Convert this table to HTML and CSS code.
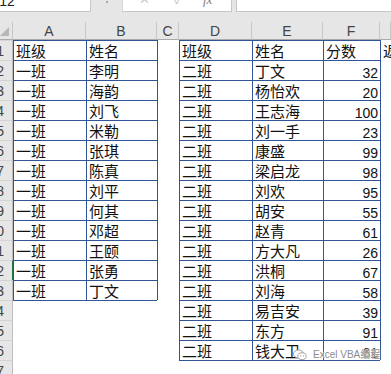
FILE: index.html
```html
<!DOCTYPE html>
<html lang="zh-CN">
<head>
<meta charset="utf-8">
<title>成绩表</title>
<link rel="stylesheet" href="styles.css">
</head>
<body>
<div class="app">
  <div class="fbar">
    <div class="namebox"><span>A12</span></div>
    <div class="grip"></div>
    <div class="fx-tools"><span class="tool">✕</span><span class="tool">✓</span><span class="tool fx">fx</span></div>
    <div class="finput"></div>
  </div>
  <div class="strip"></div>

  <div class="sheet">
    <div class="row head">
      <div class="corner"><svg width="13" height="18" viewBox="0 0 13 18"><polygon points="0,14 9,14 9,5" fill="#b7b7b7"/></svg></div>
      <div class="ch">A</div><div class="ch">B</div><div class="ch">C</div><div class="ch">D</div><div class="ch">E</div><div class="ch">F</div><div class="ch"></div>
    </div>

    <div class="row"><div class="rh">1</div><div class="c l t">班级</div><div class="c l t">姓名</div><div class="c l"></div><div class="c l t">班级</div><div class="c l t">姓名</div><div class="c l t">分数</div><div class="c l">返</div></div>
    <div class="row"><div class="rh">2</div><div class="c l t">一班</div><div class="c l t">李明</div><div class="c l"></div><div class="c l t">二班</div><div class="c l t">丁文</div><div class="c l t n">32</div><div class="c l"></div></div>
    <div class="row"><div class="rh">3</div><div class="c l t">一班</div><div class="c l t">海韵</div><div class="c l"></div><div class="c l t">二班</div><div class="c l t">杨怡欢</div><div class="c l t n">20</div><div class="c l"></div></div>
    <div class="row"><div class="rh">4</div><div class="c l t">一班</div><div class="c l t">刘飞</div><div class="c l"></div><div class="c l t">二班</div><div class="c l t">王志海</div><div class="c l t n">100</div><div class="c l"></div></div>
    <div class="row"><div class="rh">5</div><div class="c l t">一班</div><div class="c l t">米勒</div><div class="c l"></div><div class="c l t">二班</div><div class="c l t">刘一手</div><div class="c l t n">23</div><div class="c l"></div></div>
    <div class="row"><div class="rh">6</div><div class="c l t">一班</div><div class="c l t">张琪</div><div class="c l"></div><div class="c l t">二班</div><div class="c l t">康盛</div><div class="c l t n">99</div><div class="c l"></div></div>
    <div class="row"><div class="rh">7</div><div class="c l t">一班</div><div class="c l t">陈真</div><div class="c l"></div><div class="c l t">二班</div><div class="c l t">梁启龙</div><div class="c l t n">98</div><div class="c l"></div></div>
    <div class="row"><div class="rh">8</div><div class="c l t">一班</div><div class="c l t">刘平</div><div class="c l"></div><div class="c l t">二班</div><div class="c l t">刘欢</div><div class="c l t n">95</div><div class="c l"></div></div>
    <div class="row"><div class="rh">9</div><div class="c l t">一班</div><div class="c l t">何其</div><div class="c l"></div><div class="c l t">二班</div><div class="c l t">胡安</div><div class="c l t n">55</div><div class="c l"></div></div>
    <div class="row"><div class="rh">10</div><div class="c l t">一班</div><div class="c l t">邓超</div><div class="c l"></div><div class="c l t">二班</div><div class="c l t">赵青</div><div class="c l t n">61</div><div class="c l"></div></div>
    <div class="row"><div class="rh">11</div><div class="c l t">一班</div><div class="c l t">王颐</div><div class="c l"></div><div class="c l t">二班</div><div class="c l t">方大凡</div><div class="c l t n">26</div><div class="c l"></div></div>
    <div class="row"><div class="rh active">12</div><div class="c l t">一班</div><div class="c l t">张勇</div><div class="c l"></div><div class="c l t">二班</div><div class="c l t">洪桐</div><div class="c l t n">67</div><div class="c l"></div></div>
    <div class="row"><div class="rh">13</div><div class="c l t">一班</div><div class="c l t">丁文</div><div class="c l"></div><div class="c l t">二班</div><div class="c l t">刘海</div><div class="c l t n">58</div><div class="c l"></div></div>
    <div class="row"><div class="rh">14</div><div class="c t"></div><div class="c t"></div><div class="c"></div><div class="c l t">二班</div><div class="c l t">易吉安</div><div class="c l t n">39</div><div class="c l"></div></div>
    <div class="row"><div class="rh">15</div><div class="c"></div><div class="c"></div><div class="c"></div><div class="c l t">二班</div><div class="c l t">东方</div><div class="c l t n">91</div><div class="c l"></div></div>
    <div class="row"><div class="rh">16</div><div class="c"></div><div class="c"></div><div class="c"></div><div class="c l t">二班</div><div class="c l t">钱大卫</div><div class="c l t n">61</div><div class="c l"></div></div>
    <div class="row"><div class="rh">17</div><div class="c"></div><div class="c"></div><div class="c"></div><div class="c t"></div><div class="c t"></div><div class="c t"></div><div class="c"></div></div>
  </div>

  <div class="watermark">
    <svg width="14" height="12" viewBox="0 0 14 12">
      <ellipse cx="5.5" cy="5" rx="5" ry="4" fill="#fff" stroke="#9a9a9a" stroke-width="0.9"/>
      <ellipse cx="9" cy="7.2" rx="4.2" ry="3.4" fill="#fff" stroke="#9a9a9a" stroke-width="0.9"/>
      <circle cx="7.6" cy="6.9" r="0.6" fill="#9a9a9a"/>
      <circle cx="10.4" cy="6.9" r="0.6" fill="#9a9a9a"/>
    </svg>
    <span>Excel VBA编程</span>
  </div>
</div>
</body>
</html>
```

FILE: styles.css
```css
html, body {
  margin: 0;
  padding: 0;
}

body {
  width: 391px;
  height: 374px;
  overflow: hidden;
  background: #e6e6e6;
  font-family: "Liberation Sans", Arial, sans-serif;
}

.app {
  position: relative;
  width: 391px;
  height: 374px;
  overflow: hidden;
}

/* formula bar, only its lower edge is in view */
.fbar {
  display: flex;
  height: 12px;
  background: #e6e6e6;
}

.namebox {
  position: relative;
  width: 91px;
  box-sizing: border-box;
  background: #fff;
  border-right: 1px solid #c6c6c6;
  border-bottom: 1px solid #c6c6c6;
  overflow: hidden;
}

.namebox span {
  position: absolute;
  left: -10px;
  top: -6px;
  font-size: 14px;
  line-height: 14px;
  color: #222;
}

.grip {
  width: 31px;
  position: relative;
}

.grip::after {
  content: "";
  position: absolute;
  left: 15px;
  top: 1px;
  width: 2px;
  height: 2px;
  background: #a8a8a8;
}

.fx-tools {
  width: 110px;
  box-sizing: border-box;
  background: #fff;
  border-left: 1px solid #d4d4d4;
  border-right: 1px solid #c6c6c6;
  border-bottom: 1px solid #c6c6c6;
  display: flex;
  align-items: flex-start;
  overflow: hidden;
}

.tool {
  font-size: 13px;
  line-height: 13px;
  margin-top: -7px;
  color: #c9c9c9;
}

.tool:nth-child(1) { margin-left: 16px; }
.tool:nth-child(2) { margin-left: 24px; }

.fx {
  margin-left: 20px;
  font-family: "Liberation Serif", serif;
  font-style: italic;
  color: #7d7d7d;
}

.finput {
  flex: 1;
  margin-left: 4px;
  background: #fff;
  border-left: 1px solid #c6c6c6;
  border-bottom: 1px solid #c6c6c6;
}

.strip {
  height: 10px;
  background: #e6e6e6;
}

/* worksheet grid */
.sheet {
  background: #fff;
}

.row {
  display: grid;
  grid-template-columns: 13px 73px 71px 22px 73px 71px 57px 11px;
  height: 20px;
}

.row.head {
  height: 18px;
  background: #e6e6e6;
}

.corner {
  box-sizing: border-box;
  border-right: 1px solid #c6c6c6;
  border-bottom: 1px solid #ababab;
  height: 18px;
}

.corner svg {
  display: block;
}

.ch {
  box-sizing: border-box;
  border-right: 1px solid #c6c6c6;
  border-bottom: 1px solid #ababab;
  display: flex;
  align-items: center;
  justify-content: center;
  font-size: 14px;
  color: #444;
  padding-top: 1px;
}

.rh {
  box-sizing: border-box;
  background: #e6e6e6;
  border-top: 1px solid #d3d3d3;
  border-right: 1px solid #bdbdbd;
  display: flex;
  align-items: center;
  justify-content: flex-end;
  padding-right: 8px;
  overflow: hidden;
  white-space: nowrap;
  font-size: 14px;
  color: #444;
}

.rh.active {
  border-right: 1px solid #217346;
}

.c {
  box-sizing: border-box;
  display: flex;
  align-items: center;
  padding-left: 2px;
  overflow: hidden;
  white-space: nowrap;
  font-family: "Noto Sans CJK SC", "Liberation Sans", sans-serif;
  font-size: 15px;
  line-height: 19px;
  color: #111;
}

.l { border-left: 1px solid #2f5597; }
.t { border-top: 1px solid #2f5597; }

.n {
  justify-content: flex-end;
  align-items: flex-end;
  padding: 0 2px 0 0;
  font-family: "Liberation Sans", Arial, sans-serif;
  font-size: 14px;
  line-height: 14px;
}

/* account mark in the lower right corner */
.watermark {
  position: absolute;
  left: 293px;
  top: 349px;
  display: flex;
  align-items: center;
  gap: 6px;
  font-family: "Liberation Sans", "Noto Sans CJK SC", sans-serif;
  font-size: 10px;
  line-height: 12px;
  color: #8c8c8c;
  text-shadow: 0 0 2px #fff, 0 0 1px #fff;
}
```
